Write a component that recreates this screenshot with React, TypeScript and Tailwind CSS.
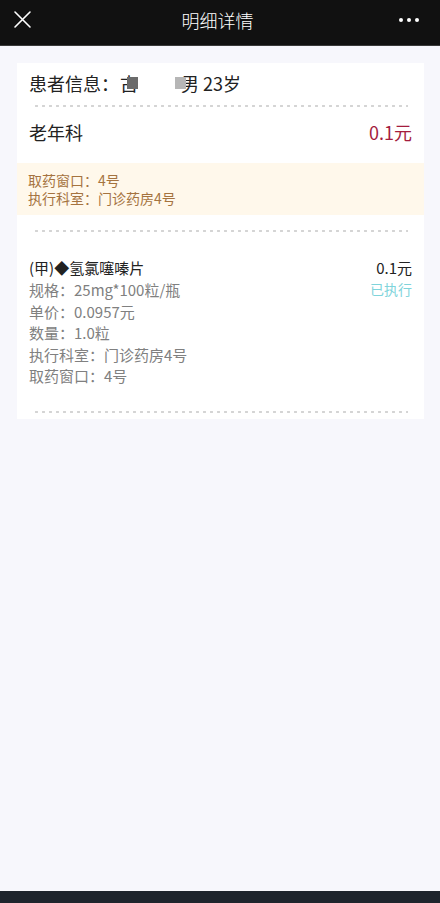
import React from "react";

const details = [
  "规格：25mg*100粒/瓶",
  "单价：0.0957元",
  "数量：1.0粒",
  "执行科室：门诊药房4号",
  "取药窗口：4号",
];

const Dots = ({ className = "" }: { className?: string }) => (
  <div
    className={`mx-[16px] h-[2px] bg-[radial-gradient(circle,#d4d4d4_1.1px,transparent_1.4px)] bg-[length:7px_2px] ${className}`}
  />
);

export default function App() {
  return (
    <div
      className="min-h-[903px] flex flex-col bg-[#f7f7fc]"
      style={{ fontFamily: '"Noto Sans CJK SC", "Noto Sans", sans-serif' }}
    >
      <header className="h-[46px] bg-[#111111] border-b border-[#3a3a3a] flex items-center justify-between px-[13px]">
        <svg width="19" height="19" viewBox="0 0 19 19" className="mt-[-6px]">
          <path d="M2 2 L17 17 M17 2 L2 17" stroke="#ffffff" strokeWidth="1.6" strokeLinecap="round" />
        </svg>
        <h1 className="text-white text-[18px] leading-[24px] font-light mt-[-6px] ml-[4px]">明细详情</h1>
        <div className="flex gap-[4px] mr-[8px] mt-[-6px]">
          <span className="size-[4px] rounded-full bg-white" />
          <span className="size-[4px] rounded-full bg-white" />
          <span className="size-[4px] rounded-full bg-white" />
        </div>
      </header>

      <main className="flex-1 pt-[17px] px-[17px] pr-[16px]">
        <section className="bg-white pb-[6px]">
          <div className="pt-[8px] px-3 flex items-center text-[18px] leading-[24px] text-[#222]">
            <span>患者信息：</span>
            <span className="ml-[1px]">古</span>
            <span className="relative -ml-[11px] w-[11px] h-[12px] bg-[#6b6b6b]" />
            <span className="w-[37px]" />
            <span className="relative z-10 w-[11px] h-[12px] bg-[#b6b6b6] -mr-[5px]" />
            <span>男 23岁</span>
          </div>
          <Dots className="mt-[10px]" />

          <div className="h-[56px] pb-[6px] px-3 flex items-center justify-between text-[18px]">
            <span className="text-[#222]">老年科</span>
            <span className="text-[#a41d3e]">0.1元</span>
          </div>

          <div className="bg-[#fff8eb] px-[11px] py-2 text-[14px] leading-[18px] text-[#a5733f]">
            <p>取药窗口：4号</p>
            <p>执行科室：门诊药房4号</p>
          </div>

          <Dots className="mt-[15px]" />

          <div className="mt-[25px] px-3 flex justify-between">
            <div>
              <p className="text-[15px] leading-[22px] text-[#222]">(甲)◆氢氯噻嗪片</p>
              {details.map((d) => (
                <p key={d} className="text-[15px] leading-[21.5px] text-[#808080]">
                  {d}
                </p>
              ))}
            </div>
            <div className="text-right">
              <p className="text-[15px] leading-[22px] text-[#222]">0.1元</p>
              <p className="text-[14px] leading-[21.5px] text-[#7fd4db]">已执行</p>
            </div>
          </div>

          <Dots className="mt-[24px]" />
        </section>
      </main>

      <footer className="h-[12px] bg-[#1e242c]" />
    </div>
  );
}
